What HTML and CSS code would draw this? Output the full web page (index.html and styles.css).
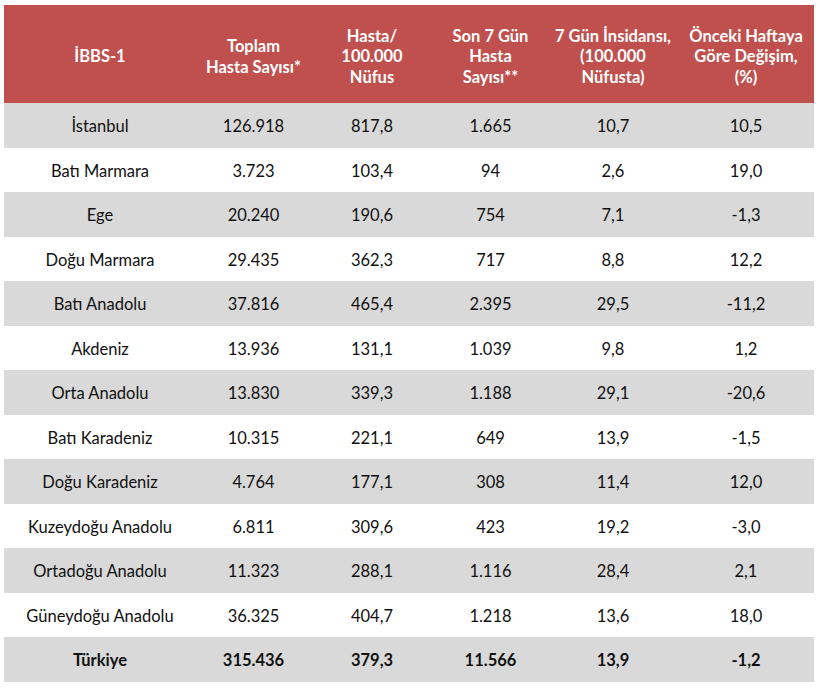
FILE: index.html
```html
<!DOCTYPE html>
<html lang="tr">
<head>
<meta charset="utf-8">
<title>İBBS-1</title>
<link rel="stylesheet" href="styles.css">
</head>
<body>
<table class="data">
  <colgroup>
    <col class="c1"><col class="c2"><col class="c3"><col class="c4"><col class="c5"><col class="c6">
  </colgroup>
  <thead>
    <tr>
      <th>İBBS-1</th>
      <th>Toplam<br>Hasta Sayısı*</th>
      <th>Hasta/<br>100.000<br>Nüfus</th>
      <th>Son 7 Gün<br>Hasta<br>Sayısı**</th>
      <th>7 Gün İnsidansı,<br>(100.000<br>Nüfusta)</th>
      <th>Önceki Haftaya<br>Göre Değişim,<br>(%)</th>
    </tr>
  </thead>
  <tbody>
    <tr><td>İstanbul</td><td>126.918</td><td>817,8</td><td>1.665</td><td>10,7</td><td>10,5</td></tr>
    <tr><td>Batı Marmara</td><td>3.723</td><td>103,4</td><td>94</td><td>2,6</td><td>19,0</td></tr>
    <tr><td>Ege</td><td>20.240</td><td>190,6</td><td>754</td><td>7,1</td><td>-1,3</td></tr>
    <tr><td>Doğu Marmara</td><td>29.435</td><td>362,3</td><td>717</td><td>8,8</td><td>12,2</td></tr>
    <tr><td>Batı Anadolu</td><td>37.816</td><td>465,4</td><td>2.395</td><td>29,5</td><td>-11,2</td></tr>
    <tr><td>Akdeniz</td><td>13.936</td><td>131,1</td><td>1.039</td><td>9,8</td><td>1,2</td></tr>
    <tr><td>Orta Anadolu</td><td>13.830</td><td>339,3</td><td>1.188</td><td>29,1</td><td>-20,6</td></tr>
    <tr><td>Batı Karadeniz</td><td>10.315</td><td>221,1</td><td>649</td><td>13,9</td><td>-1,5</td></tr>
    <tr><td>Doğu Karadeniz</td><td>4.764</td><td>177,1</td><td>308</td><td>11,4</td><td>12,0</td></tr>
    <tr><td>Kuzeydoğu Anadolu</td><td>6.811</td><td>309,6</td><td>423</td><td>19,2</td><td>-3,0</td></tr>
    <tr><td>Ortadoğu Anadolu</td><td>11.323</td><td>288,1</td><td>1.116</td><td>28,4</td><td>2,1</td></tr>
    <tr><td>Güneydoğu Anadolu</td><td>36.325</td><td>404,7</td><td>1.218</td><td>13,6</td><td>18,0</td></tr>
    <tr class="total"><td>Türkiye</td><td>315.436</td><td>379,3</td><td>11.566</td><td>13,9</td><td>-1,2</td></tr>
  </tbody>
</table>
</body>
</html>
```

FILE: styles.css
```css
html, body {
  margin: 0;
  background: #ffffff;
}
body {
  padding: 5px 6px 0 4px;
  font-family: Lato, "Open Sans", "Liberation Sans", sans-serif;
  color: #111111;
}
.data {
  width: 810px;
  border-collapse: collapse;
  table-layout: fixed;
}
.c1 { width: 192px; }
.c2 { width: 115px; }
.c3 { width: 122px; }
.c4 { width: 115px; }
.c5 { width: 130px; }
.c6 { width: 136px; }
.data th {
  height: 98px;
  padding: 5px 0 0 0;
  box-sizing: border-box;
  background: #c0504d;
  color: #ffffff;
  font-weight: 700;
  font-size: 16.5px;
  line-height: 20.5px;
  text-align: center;
  vertical-align: middle;
}
.data td {
  height: 44.5px;
  padding: 2px 0 0 0;
  box-sizing: border-box;
  font-size: 16.5px;
  text-align: center;
  vertical-align: middle;
}
.data tbody tr:nth-child(odd) td {
  background: #d9d9d9;
}
.data tr.total td {
  font-weight: 700;
}
```
